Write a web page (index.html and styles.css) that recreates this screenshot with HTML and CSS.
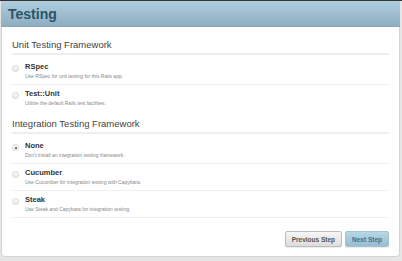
FILE: index.html
```
<!DOCTYPE html>
<html lang="en">
<head>
  <meta charset="UTF-8" />
  <title>Testing</title>
  <link rel="stylesheet" href="styles.css">
</head>
<body>
  <div id="wizard">
    <div class="step-header">
      <h1>Testing</h1>
    </div>
    <div class="step-body">
      <div class="section">
        <h3>Unit Testing Framework</h3>
        <label class="choice">
          <span class="radio"></span>
          <span class="choice-text">
            <span class="choice-name">RSpec</span>
            <span class="choice-desc">Use RSpec for unit testing for this Rails app.</span>
          </span>
        </label>
        <label class="choice">
          <span class="radio"></span>
          <span class="choice-text">
            <span class="choice-name">Test::Unit</span>
            <span class="choice-desc">Utilize the default Rails test facilities.</span>
          </span>
        </label>
      </div>
      <div class="section">
        <h3>Integration Testing Framework</h3>
        <label class="choice">
          <span class="radio checked"></span>
          <span class="choice-text">
            <span class="choice-name">None</span>
            <span class="choice-desc">Don't install an integration testing framework.</span>
          </span>
        </label>
        <label class="choice">
          <span class="radio"></span>
          <span class="choice-text">
            <span class="choice-name">Cucumber</span>
            <span class="choice-desc">Use Cucumber for integration testing with Capybara.</span>
          </span>
        </label>
        <label class="choice last">
          <span class="radio"></span>
          <span class="choice-text">
            <span class="choice-name">Steak</span>
            <span class="choice-desc">Use Steak and Capybara for integration testing.</span>
          </span>
        </label>
      </div>
      <div class="step-buttons">
        <button class="btn">Previous Step</button>
        <button class="btn btn-next">Next Step</button>
      </div>
    </div>
  </div>
</body>
</html>
```

FILE: styles.css
```
body {
  margin: 0;
  padding: 0;
  background: #e6e6e6;
  border-top: 1px solid #333;
  font-family: "Liberation Sans", Arial, sans-serif;
  color: #333;
}
#wizard {
  margin: 0 2px 0 1px;
  background: #fff;
  border: 1px solid #d4d4d4;
  border-top: none;
  border-radius: 0 0 4px 4px;
}
.step-header {
  height: 26px;
  margin: 0 -1px;
  background: linear-gradient(#afcddd, #8eafc1);
  border-bottom: 1px solid #86a6b8;
  box-sizing: border-box;
}
.step-header h1 {
  margin: 0;
  padding: 5px 0 0 7px;
  font-size: 14px;
  line-height: 16px;
  color: #2a5668;
}
.step-body {
  padding: 12px 10px 9px 10px;
}
.section h3 {
  margin: 0 0 3px;
  padding-bottom: 3px;
  font-size: 9.5px;
  line-height: 11px;
  font-weight: normal;
  color: #444;
  border-bottom: 2px solid #eee;
}
.section + .section {
  margin-top: 7px;
}
.choice {
  display: flex;
  align-items: flex-start;
  gap: 6px;
  padding: 4px 0 5px;
  border-bottom: 1px solid #f0f0f0;
}
.choice:last-child {
  border-bottom: none;
}
.choice.last {
  border-bottom: 1px solid #f0f0f0;
}
.radio {
  flex: none;
  width: 5px;
  height: 5px;
  margin-top: 3px;
  border: 1px solid #d6d6d6;
  border-radius: 50%;
  background: linear-gradient(#fbfbfb, #e9e9e9);
  position: relative;
}
.radio.checked::after {
  content: "";
  position: absolute;
  left: 1.5px;
  top: 1.5px;
  width: 2px;
  height: 2px;
  border-radius: 50%;
  background: #555;
}
.choice-text {
  display: flex;
  flex-direction: column;
  gap: 2px;
}
.choice-name {
  font-size: 7.5px;
  line-height: 9px;
  font-weight: bold;
  color: #333;
}
.choice-desc {
  font-size: 5px;
  line-height: 6px;
  color: #888;
}
.step-buttons {
  display: flex;
  justify-content: flex-end;
  gap: 3px;
  margin-top: 13px;
}
.btn {
  height: 16px;
  padding: 0 6px;
  font-family: "Liberation Sans", Arial, sans-serif;
  font-size: 6.5px;
  font-weight: bold;
  color: #555;
  background: linear-gradient(#f6f6f6, #dcdcdc);
  border: 1px solid #bdbdbd;
  border-radius: 2px;
  box-shadow: 0 1px 1px rgba(0,0,0,0.08);
  cursor: pointer;
}
.btn-next {
  color: #3d7290;
  background: linear-gradient(#b9d7e6, #96bdd1);
  border-color: #a3c3d3;
}
```
